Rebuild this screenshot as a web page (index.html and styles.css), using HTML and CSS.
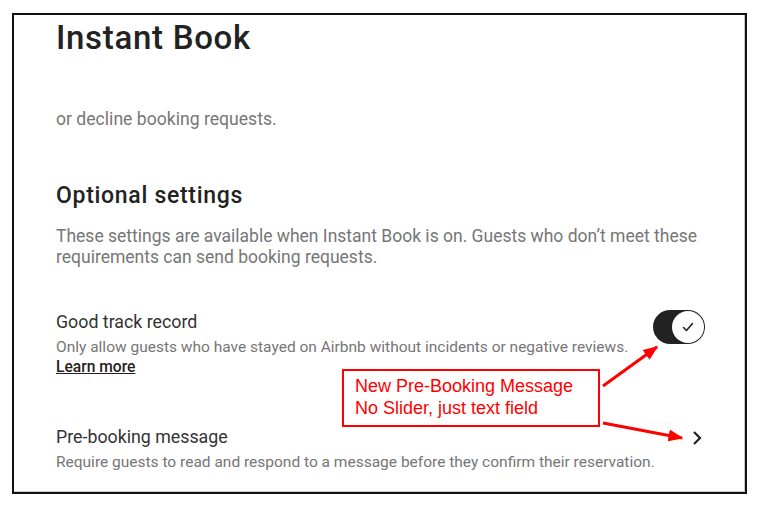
FILE: index.html
```html
<!DOCTYPE html>
<html>
<head>
  <title>Instant Book</title>
  <link rel="stylesheet" href="styles.css">
</head>
<body>
  <div class="frame">
    <div class="page">
      <h1 class="title">Instant Book</h1>
      <p class="muted lead">or decline booking requests.</p>

      <h2 class="section-title">Optional settings</h2>
      <p class="muted intro">These settings are available when Instant Book is on. Guests who don’t meet these requirements can send booking requests.</p>

      <div class="setting">
        <div class="setting-text">
          <div class="setting-name">Good track record</div>
          <div class="muted setting-desc">Only allow guests who have stayed on Airbnb without incidents or negative reviews.</div>
          <a class="learn" href="#">Learn more</a>
        </div>
        <button class="toggle" aria-label="Good track record on">
          <span class="knob">
            <svg width="12" height="12" viewBox="0 0 12 12"><path d="M1.5 6.5 L4.5 9.5 L10.5 2.5" fill="none" stroke="#222" stroke-width="1.6" stroke-linecap="round" stroke-linejoin="round"/></svg>
          </span>
        </button>
      </div>

      <div class="setting setting-link">
        <div class="setting-text">
          <div class="setting-name">Pre-booking message</div>
          <div class="muted setting-desc">Require guests to read and respond to a message before they confirm their reservation.</div>
        </div>
        <svg class="chevron" width="12" height="16" viewBox="0 0 12 16"><path d="M3 2 L9 8 L3 14" fill="none" stroke="#222" stroke-width="2.2"/></svg>
      </div>
    </div>
  </div>

  <div class="note">New Pre-Booking Message<br>No Slider, just text field</div>

  <svg class="arrows" width="765" height="505" viewBox="0 0 765 505">
    <defs>
      <marker id="head" markerWidth="5" markerHeight="4" refX="4.5" refY="2" orient="auto" markerUnits="strokeWidth">
        <path d="M0 0 L5 2 L0 4 Z" fill="#f00"/>
      </marker>
    </defs>
    <line x1="603" y1="386" x2="657" y2="347" stroke="#f00" stroke-width="3" marker-end="url(#head)"/>
    <line x1="603" y1="423" x2="682" y2="438" stroke="#f00" stroke-width="3" marker-end="url(#head)"/>
  </svg>
</body>
</html>
```

FILE: styles.css
```css
* {
  box-sizing: border-box;
}
body {
  margin: 0;
  width: 765px;
  height: 505px;
  position: relative;
  background: #fff;
  font-family: Roboto, "Liberation Sans", sans-serif;
  color: #222;
  overflow: hidden;
}
.frame {
  margin: 13px 0 0 12px;
  width: 735px;
  height: 481px;
  border: 2px solid #111;
  box-shadow: inset -1px -1px 0 #c8c8c8;
}
.page {
  padding: 5px 36px 0 42px;
}
.title {
  margin: 0;
  font-size: 33px;
  line-height: 36px;
  font-weight: 500;
  letter-spacing: 0.7px;
}
.muted {
  color: #767676;
  font-size: 16px;
  line-height: 20px;
  margin: 0;
}
.lead {
  margin-top: 53px;
  font-size: 17.6px;
}
.section-title {
  margin: 54px 0 0;
  font-size: 23px;
  line-height: 26px;
  font-weight: 500;
  letter-spacing: 0.7px;
}
.intro {
  margin-top: 17px;
  font-size: 17.5px;
  line-height: 21px;
}
.setting {
  display: flex;
  justify-content: space-between;
  align-items: flex-start;
  margin-top: 44px;
}
.setting-link {
  margin-top: 50px;
}
.setting-name {
  font-size: 17.8px;
  line-height: 20px;
  color: #333;
}
.setting-desc {
  margin-top: 5px;
  font-size: 15.5px;
}
.learn {
  display: inline-block;
  font-size: 15.6px;
  line-height: 20px;
  font-weight: 500;
  color: #222;
}
.toggle {
  flex: none;
  width: 52px;
  height: 34px;
  margin: -2px 4px 0 0;
  padding: 1px;
  border: none;
  border-radius: 17px;
  background: #222;
  display: flex;
  justify-content: flex-end;
}
.knob {
  width: 32px;
  height: 32px;
  border-radius: 50%;
  background: #fff;
  display: flex;
  align-items: center;
  justify-content: center;
}
.chevron {
  flex: none;
  margin: 3px 6px 0 0;
}
.note {
  position: absolute;
  left: 342px;
  top: 369px;
  width: 258px;
  height: 58px;
  border: 2px solid #f00;
  padding: 4px 0 0 11px;
  font-family: "Liberation Sans", Arial, sans-serif;
  font-size: 18px;
  line-height: 22px;
  color: #f00;
  background: #fff;
}
.arrows {
  position: absolute;
  left: 0;
  top: 0;
  pointer-events: none;
}
```
